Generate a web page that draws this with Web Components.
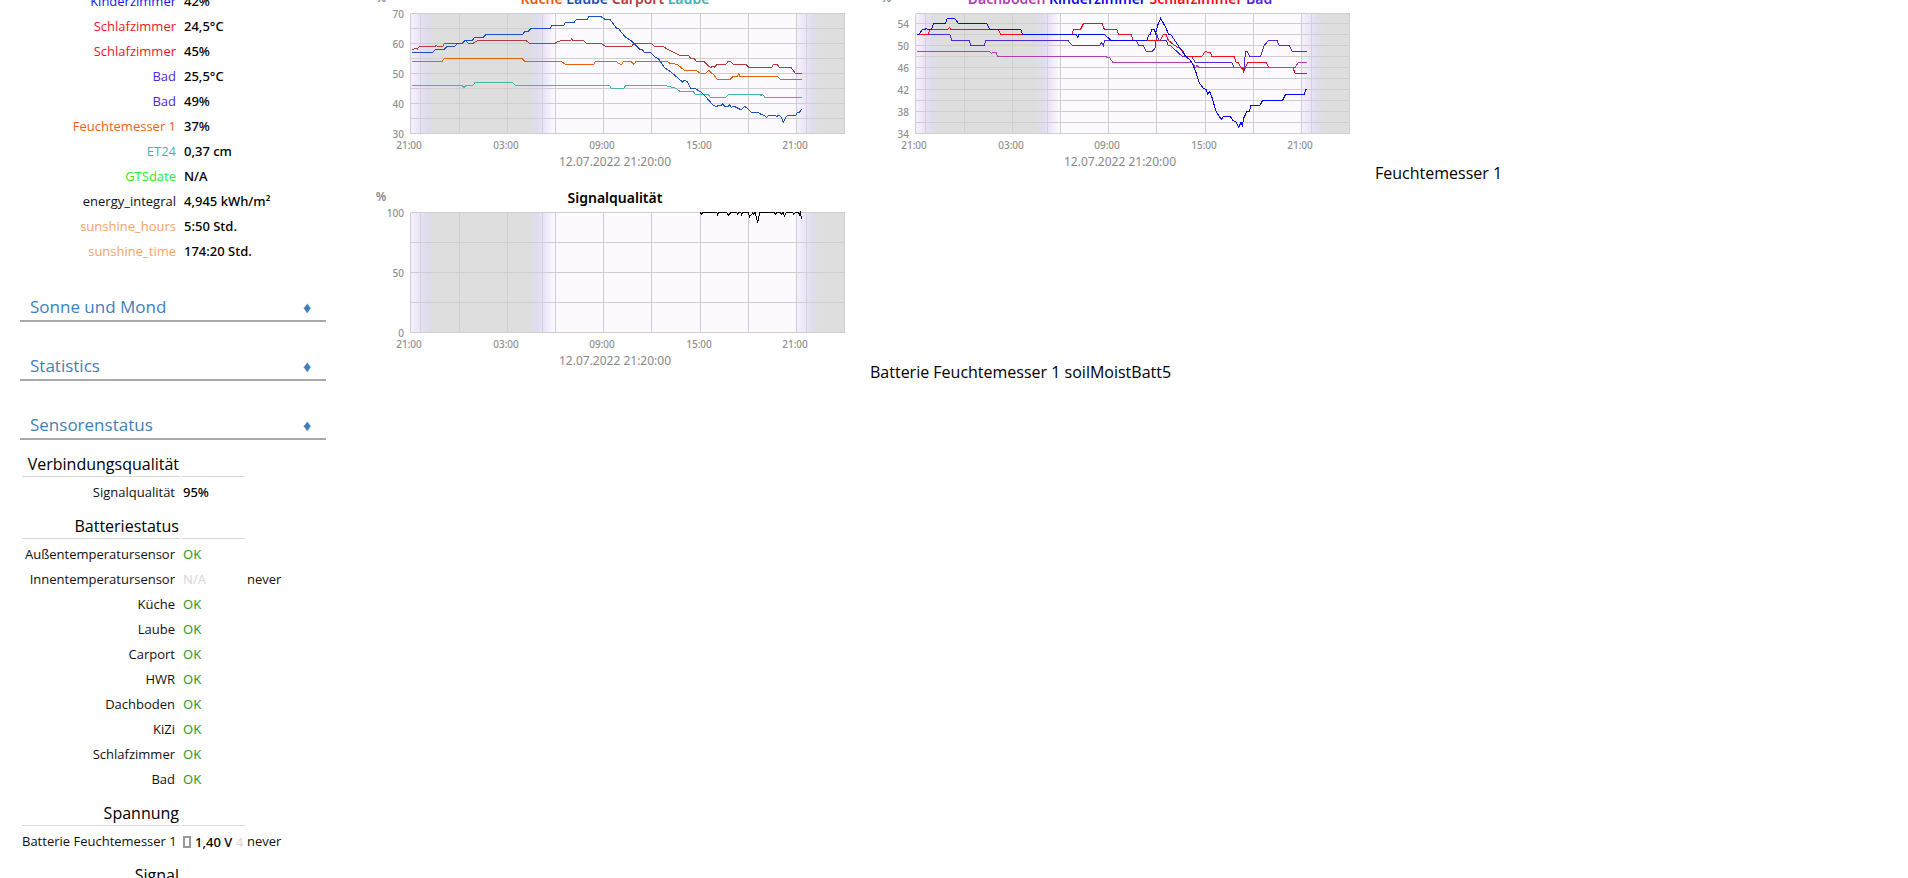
<!DOCTYPE html>
<html lang="de">
<head>
<meta charset="utf-8">
<title>Wetterstation</title>
<style>
html, body { margin: 0; background: #fff; }
body { height: 100vh; overflow: hidden; font: 16px/22px "Open Sans", "Noto Sans", sans-serif; color: #000; }
</style>
</head>
<body>
<weather-page>
  <station-sidebar slot="side"></station-sidebar>
  <plot-row slot="main">
    <day-plot name="humidity-out"></day-plot>
    <day-plot name="humidity-in"></day-plot>
    <span>Feuchtemesser 1</span>
  </plot-row>
  <plot-row slot="main">
    <day-plot name="signal"></day-plot>
    <span>Batterie Feuchtemesser 1 soilMoistBatt5</span>
  </plot-row>
</weather-page>
<script>
customElements.define('weather-page', class extends HTMLElement {
  constructor() {
    super();
    this.attachShadow({ mode: 'open' }).innerHTML = `
      <style>
        :host { display: flex; gap: 39px; margin-top: -19px; }
        aside { flex: none; width: 306px; padding: 5px 0 0 20px; }
        main { flex: 1; min-width: 0; }
      </style>
      <aside><slot name="side"></slot></aside>
      <main><slot name="main"></slot></main>`;
  }
});

customElements.define('plot-row', class extends HTMLElement {
  constructor() {
    super();
    this.attachShadow({ mode: 'open' }).innerHTML = `
      <style>
        :host { display: flex; gap: 5px; align-items: flex-end; white-space: nowrap; height: 199px; }
        ::slotted(span) { margin-bottom: -4px; }
      </style><slot></slot>`;
  }
});

customElements.define('section-head', class extends HTMLElement {
  constructor() {
    super();
    this.attachShadow({ mode: 'open' }).innerHTML = `
      <style>
        :host { display: block; margin-top: 33px; color: #3f80b8; }
        h2 { display: flex; justify-content: space-between; margin: 0; padding: 0 12px 2px 10px;
             font: inherit; font-size: 17px; line-height: 22px; border-bottom: 2px solid #a8a8a8; }
        button { all: unset; cursor: pointer; width: 14px; text-align: center; font-size: 16px; line-height: 22px; }
      </style>
      <h2><slot></slot><button type="button" aria-label="Ein-/Ausklappen">♦</button></h2>`;
  }
});

/* Rows: [label, value, label colour, value class, note]; a single entry is a group heading. */
const TABLES = {
  readings: [
    ['Kinderzimmer', '42%', '#1414f0'],
    ['Schlafzimmer', '24,5°C', '#f01428'],
    ['Schlafzimmer', '45%', '#f01428'],
    ['Bad', '25,5°C', '#5028d8'],
    ['Bad', '49%', '#5028d8'],
    ['Feuchtemesser 1', '37%', '#e86418'],
    ['ET24', '0,37 cm', '#48b4b0'],
    ['GTSdate', 'N/A', '#30e830'],
    ['energy_integral', '4,945 kWh/m²', '#111'],
    ['sunshine_hours', '5:50 Std.', '#f4a468'],
    ['sunshine_time', '174:20 Std.', '#f4a468']
  ],
  sensors: [
    ['Verbindungsqualität'],
    ['Signalqualität', '95%'],
    ['Batteriestatus'],
    ['Außentemperatursensor', 'OK', '', 'ok'],
    ['Innentemperatursensor', 'N/A', '', 'na', 'never'],
    ['Küche', 'OK', '', 'ok'],
    ['Laube', 'OK', '', 'ok'],
    ['Carport', 'OK', '', 'ok'],
    ['HWR', 'OK', '', 'ok'],
    ['Dachboden', 'OK', '', 'ok'],
    ['KiZi', 'OK', '', 'ok'],
    ['Schlafzimmer', 'OK', '', 'ok'],
    ['Bad', 'OK', '', 'ok'],
    ['Spannung'],
    ['Batterie Feuchtemesser 1', '<i></i>1,40 V <span class="na">4</span>', '', 'volt', 'never'],
    ['Signal']
  ]
};

customElements.define('value-table', class extends HTMLElement {
  connectedCallback() {
    const rows = TABLES[this.getAttribute('name')].map(r => r.length === 1
      ? `<tr class="group"><th scope="rowgroup">${r[0]}</th><td></td><td class="blank"></td></tr>`
      : `<tr><th scope="row" style="color:${r[2] || '#111'}">${r[0]}</th><td class="${r[3] || ''}">${r[1]}</td><td class="note">${r[4] || ''}</td></tr>`).join('');
    this.attachShadow({ mode: 'open' }).innerHTML = `
      <style>
        :host { display: block; }
        table { border-spacing: 2px; table-layout: fixed; width: 100%; font-size: 13px; line-height: 18px; }
        col.label { width: 158px; }
        col.value { width: 63px; }
        th, td { padding: 4px 0 1px 1px; height: 18px; text-align: left; white-space: nowrap; vertical-align: top; }
        th { padding: 4px 5px 1px 0; font-weight: 400; text-align: right; }
        td { font-family: "Noto Sans", sans-serif; font-weight: 500; }
        .ok { color: #2f9c2f; font-weight: 400; }
        .na { color: #d8d8d8; font-weight: 400; }
        .volt { padding: 5px 0 0 1px; }
        .note { font-family: inherit; font-weight: 400; color: #111; padding-left: 0; }
        .group th { padding: 11px 1px 1px 0; font-size: 16px; line-height: 22px; }
        .group th, .group td { border-bottom: 1px solid #d8d8d8; }
        .group .blank { border: 0; }
        i { display: inline-block; width: 4px; height: 8px; border: 2px solid #999; margin-right: 4px; vertical-align: -1px; }
      </style>
      <table><colgroup><col class="label"><col class="value"><col></colgroup><tbody>${rows}</tbody></table>`;
  }
});

customElements.define('station-sidebar', class extends HTMLElement {
  constructor() {
    super();
    this.attachShadow({ mode: 'open' }).innerHTML = `
      <style>
        :host { display: block; }
        .readings { margin-left: 1px; }
      </style>
      <value-table class="readings" name="readings"></value-table>
      <section-head>Sonne und Mond</section-head>
      <section-head>Statistics</section-head>
      <section-head>Sensorenstatus</section-head>
      <value-table name="sensors"></value-table>`;
  }
});

/* Lines are stored in thirds of a pixel, in morning and afternoon parts with an x shift each. */
const PLOTS = {
  'humidity-out': {
    title: [['Küche', '#e8590c'], ['Laube', '#1c50b8'], ['Carport', '#b03c40'], ['Laube', '#44b0b0']],
    rows: [32, 47, 62, 77, 92, 107, 122, 137, 152],
    labels: [[70, 32], [60, 62], [50, 92], [40, 122], [30, 152]],
    shift: [0, 720], top: 57,
    lines: [
      ['#44b4b0', '142,256 290,256 297,263 303,256 323,256 331,247 442,247 452,256 733,256 739,265', '20,265 57,265 62,256 183,256 190,260 208,262 225,274 264,274 271,283 310,283 316,292 362,292 371,283 463,283 468,286 473,283 480,292 590,292'],
      ['#e8600c', '142,184 232,184 238,175 470,175 480,184 587,184 602,193 686,193 692,184 720,184', '32,184 46,193 50,193 56,184 78,184 86,193 94,184 185,184 195,190 217,193 238,211 272,211 287,220 302,220 312,211 320,220 325,223 337,238 376,238 385,229 398,229 401,221 405,229 518,229 526,238 590,238'],
      ['#b03c40', '142,149 146,149 149,145 157,147 163,139 210,139 213,136 219,139 233,139 238,130 292,130 300,121 310,130 324,130 332,125 340,121 482,121 493,130 570,130 578,125 594,121 617,121 620,116 624,121 655,121 665,130 707,130 722,139', '80,139 87,130 139,130 148,139 175,139 185,147 225,166 250,166 257,175 268,175 273,184 297,184 305,193 317,203 322,199 328,202 337,193 362,193 370,184 377,184 385,193 422,193 431,202 500,202 506,193 517,193 522,202 558,202 571,220 590,220'],
      ['#1c50c0', '142,157 203,157 212,148 238,148 246,139 270,139 276,130 293,130 300,121 322,121 329,112 355,112 363,103 474,103 479,94 489,94 499,85 557,85 560,76 597,76 601,67 628,67 634,58 667,58 671,49 707,49 715,55 720,58', '15,58 35,85 40,85 48,95 60,110 80,123 91,134 105,149 112,149 118,157 137,157 150,171 160,176 178,202 200,218 233,246 238,241 246,244 257,265 272,267 290,277 325,316 335,320 341,316 348,317 352,311 360,319 370,319 374,314 378,322 387,319 408,329 420,319 440,338 460,338 468,343 480,347 484,352 490,347 510,347 515,349 522,346 529,351 535,367 543,350 550,346 572,346 577,338 584,336 590,328']
    ]
  },
  'humidity-in': {
    title: [['Dachboden', '#b040b0'], ['Kinderzimmer', '#0808f0'], ['Schlafzimmer', '#f80818'], ['Bad', '#5028d8']],
    rows: [32, 42, 53, 64, 75, 86, 97, 108, 119, 130, 141, 152],
    labels: [[54, 42], [50, 64], [46, 86], [42, 108], [38, 130], [34, 152]],
    shift: [-15, 735], top: 57,
    lines: [
      ['#5028d8', '157,103 254,103 260,121 312,121 317,136 358,136 363,121 608,121 622,136 705,136 710,127 715,136 719,121 750,121', '64,121 71,136 85,137 93,154 112,154 120,145 125,104 132,121 155,121 159,136 165,136 203,170 230,170 241,187 350,187 358,203 384,203 386,220 389,188 391,154 397,154 404,169 437,169 447,137 461,121 486,121 492,136 523,136 532,154 576,154'],
      ['#f80818', '157,103 190,103 195,88 249,88 253,82 257,88 400,88 407,103 621,103 626,88 647,88 656,70 711,70 718,88 750,88', '5,88 10,103 48,103 54,121 136,121 145,103 153,103 160,121 172,131 203,152 212,169 261,169 271,154 277,157 286,157 290,169 357,169 363,187 370,187 378,203 388,211 398,187 454,187 462,203 534,203 540,220 576,220'],
      ['#b040b0', '157,154 373,154 380,160 385,157 394,158 398,170 721,170 735,174 743,187', '230,187 242,203 246,195 252,203 540,203 550,187 576,187'],
      ['#0808f8', '157,103 162,103 173,88 181,88 184,85 188,88 200,88 206,70 241,70 247,55 269,55 280,70 365,70 374,88 467,88 473,103 634,103 638,112 642,103 718,103 738,121', '96,121 101,105 106,103 111,88 118,88 122,101 128,76 137,55 153,84 161,103 167,103 211,168 225,180 233,192 244,220 252,247 264,264 273,268 278,283 284,275 290,289 302,331 313,350 320,357 326,349 346,349 353,361 364,367 371,382 378,367 382,376 386,355 396,334 403,334 408,316 435,316 443,301 503,301 512,283 568,283 572,268 576,268']
    ]
  },
  signal: {
    title: [['Signalqualität', '#000']],
    rows: [32, 62, 92, 122, 152],
    labels: [[100, 32], [50, 92], [0, 152]],
    shift: [0, 0], top: 0,
    lines: [['#000', '1006,97 1009,104 1013,97 1055,97 1058,104 1061,97 1085,97 1091,107 1097,97 1115,97 1118,103 1122,97 1127,97 1130,104 1134,97', '1149,97 1154,110 1160,103 1163,97 1166,103 1170,97 1174,112 1178,128 1184,97 1228,97 1232,103 1236,97 1246,97 1249,103 1254,97 1258,109 1264,98 1283,97 1286,103 1291,97 1300,97 1303,104 1306,97 1310,117']]
  }
};

customElements.define('day-plot', class extends HTMLElement {
  connectedCallback() {
    const id = this.getAttribute('name');
    const p = PLOTS[id];
    const offset = (text, shift) => text.split(' ').map(pair => {
      const [x, y] = pair.split(',').map(Number);
      return `${x + shift},${y + p.top}`;
    }).join(' ');
    const hours = [45, 94, 142, 190, 238, 286, 335, 383, 431, 479];
    const ticks = [['21:00', 44], ['03:00', 141], ['09:00', 237], ['15:00', 334], ['21:00', 430]];
    this.attachShadow({ mode: 'open' }).innerHTML = `
      <style>
        :host { display: block; flex: none; }
        svg { display: block; overflow: visible; font-family: "Noto Sans", sans-serif; }
        .grid { stroke: #cfcfcf; shape-rendering: crispEdges; }
        .grid .sun { stroke: #d8d0dc; }
        polyline { fill: none; stroke-width: 1px; vector-effect: non-scaling-stroke; shape-rendering: crispEdges; }
        text { font-size: 10px; font-weight: 500; fill: #909090; text-anchor: middle; }
        .y { text-anchor: end; }
        .unit { font-size: 12px; font-weight: 600; fill: #888; }
        .title { font-size: 14px; font-weight: 600; }
        .date { font-size: 12px; font-weight: 400; fill: #888; }
      </style>
      <svg width="500" height="199" viewBox="0 0 500 199" role="img">
        <defs><linearGradient id="sky" gradientUnits="userSpaceOnUse" x1="45" x2="479">
          <stop offset="0" stop-color="#f9effe"/>
          <stop offset="0.014" stop-color="#f1e9fa"/>
          <stop offset="0.026" stop-color="#e5e0f2"/>
          <stop offset="0.041" stop-color="#dddcec"/>
          <stop offset="0.055" stop-color="#dededf"/>
          <stop offset="0.274" stop-color="#dededf"/>
          <stop offset="0.295" stop-color="#dfddee"/>
          <stop offset="0.309" stop-color="#ebe4f8"/>
          <stop offset="0.322" stop-color="#f6effc"/>
          <stop offset="0.333" stop-color="#fcfaff"/>
          <stop offset="0.887" stop-color="#fcfaff"/>
          <stop offset="0.893" stop-color="#f6eefc"/>
          <stop offset="0.909" stop-color="#ece6f8"/>
          <stop offset="0.926" stop-color="#e0deee"/>
          <stop offset="0.942" stop-color="#dededf"/>
          <stop offset="1" stop-color="#dededf"/>
        </linearGradient></defs>
        <rect x="45" y="32" width="434" height="121" fill="url(#sky)"/>
        <g class="grid" transform="translate(.5 .5)">
          ${[55, 177, 441].map(x => `<line class="sun" x1="${x}" x2="${x}" y1="32" y2="152"/>`).join('')}
          ${hours.map(x => `<line x1="${x}" x2="${x}" y1="32" y2="152"/>`).join('')}
          ${p.rows.map(y => `<line x1="45" x2="479" y1="${y}" y2="${y}"/>`).join('')}
        </g>
        <g transform="scale(.33333)">
          ${p.lines.map(l => `<polyline stroke="${l[0]}" points="${offset(l[1], p.shift[0])} ${offset(l[2], p.shift[1])}"/>`).join('')}
        </g>
        <text class="unit" x="16" y="21">%</text>
        <text class="title" x="250" y="23">${p.title.map(t => `<tspan fill="${t[1]}">${t[0]}</tspan>`).join(' ')}</text>
        ${p.labels.map(l => `<text class="y" x="39" y="${l[1] + 5}">${l[0]}</text>`).join('')}
        ${ticks.map(t => `<text x="${t[1]}" y="168">${t[0]}</text>`).join('')}
        <text class="date" x="250" y="185">12.07.2022 21:20:00</text>
      </svg>`;
  }
});
</script>
</body>
</html>
